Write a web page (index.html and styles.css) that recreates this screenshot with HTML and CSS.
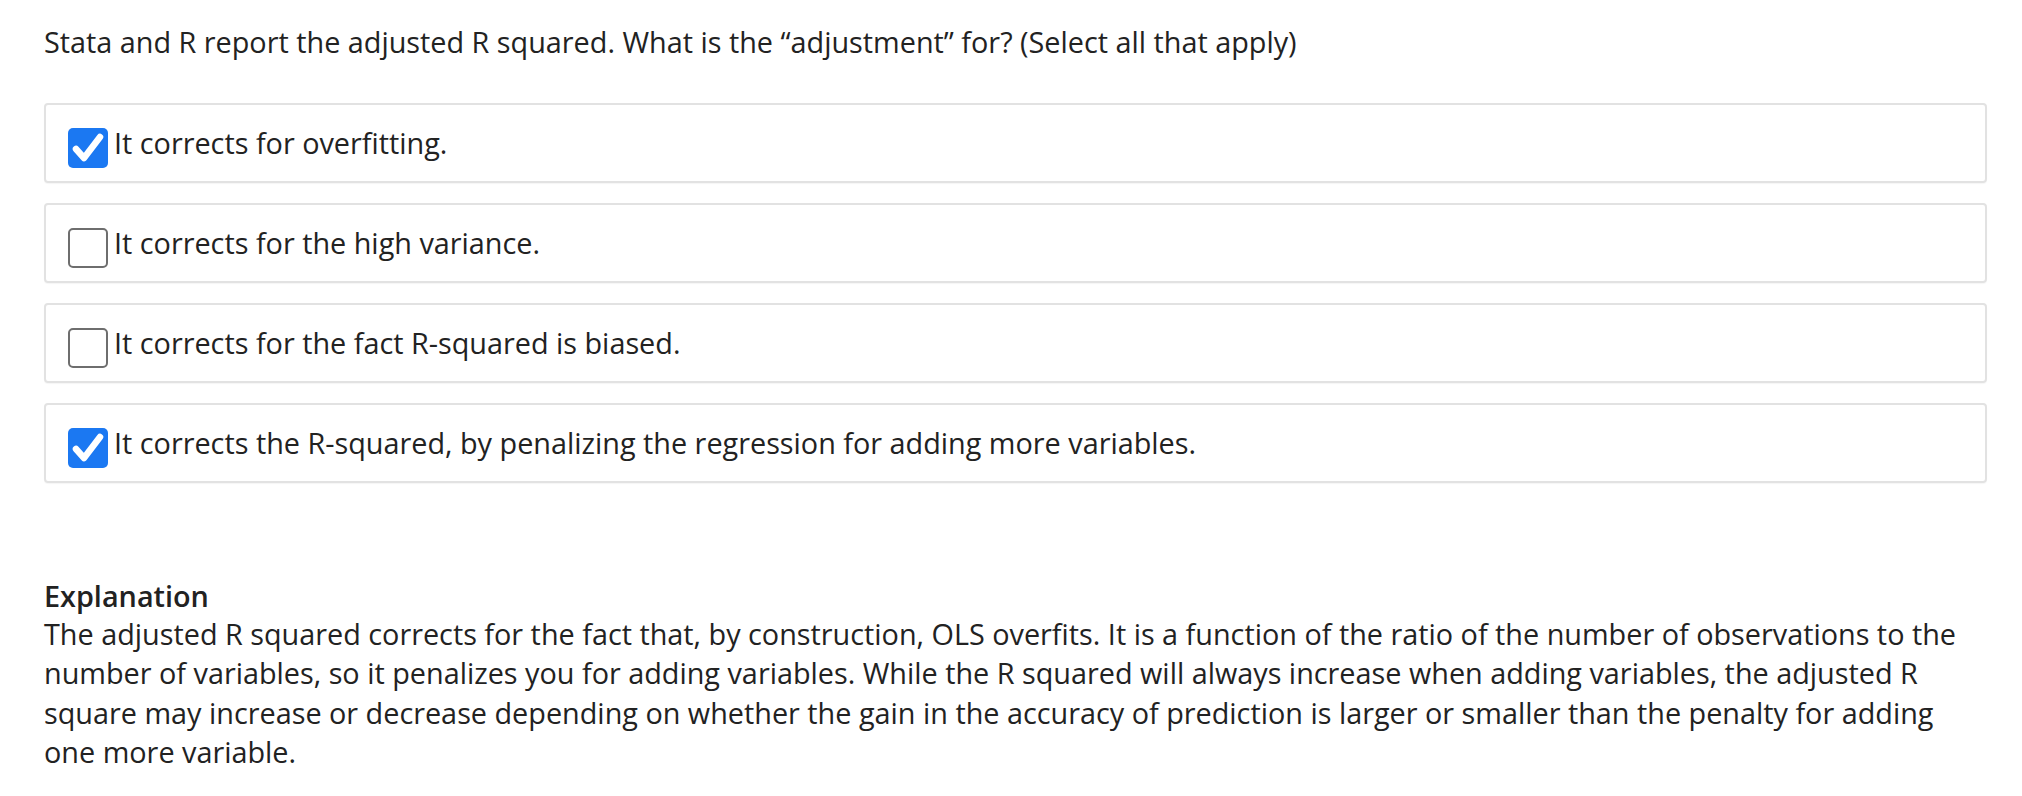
FILE: index.html
```html
<!DOCTYPE html>
<html lang="en">
<head>
<meta charset="utf-8">
<title>Adjusted R squared</title>
<link rel="stylesheet" href="styles.css">
</head>
<body>
<main class="quiz">
  <p class="question">Stata and R report the adjusted R squared. What is the “adjustment” for? (Select all that apply)</p>
  <ul class="options">
    <li class="option">
      <span class="check checked"><svg viewBox="0 0 40 40"><path d="M8 21 L16 30 L32 9"/></svg></span>
      <span class="label">It corrects for overfitting.</span>
    </li>
    <li class="option">
      <span class="check"></span>
      <span class="label">It corrects for the high variance.</span>
    </li>
    <li class="option">
      <span class="check"></span>
      <span class="label">It corrects for the fact R-squared is biased.</span>
    </li>
    <li class="option">
      <span class="check checked"><svg viewBox="0 0 40 40"><path d="M8 21 L16 30 L32 9"/></svg></span>
      <span class="label">It corrects the R-squared, by penalizing the regression for adding more variables.</span>
    </li>
  </ul>
  <section class="explanation">
    <h2 class="exp-title">Explanation</h2>
    <p class="exp-text">The adjusted R squared corrects for the fact that, by construction, OLS overfits. It is a function of the ratio of the number of observations to the number of variables, so it penalizes you for adding variables. While the R squared will always increase when adding variables, the adjusted R square may increase or decrease depending on whether the gain in the accuracy of prediction is larger or smaller than the penalty for adding one more variable.</p>
  </section>
</main>
</body>
</html>
```

FILE: styles.css
```css
html, body {
  margin: 0;
  padding: 0;
  background: #ffffff;
}
body {
  font-family: "Open Sans", "Liberation Sans", sans-serif;
  font-size: 28.8px;
  line-height: 39.6px;
  color: #222222;
}
.quiz {
  padding: 22px 35px 0 44px;
}
.question {
  margin: 0 0 41px 0;
}
.options {
  list-style: none;
  margin: 0;
  padding: 0;
  display: flex;
  flex-direction: column;
  gap: 20px;
}
.option {
  display: flex;
  align-items: flex-start;
  gap: 6px;
  border: 2px solid #e2e2e2;
  border-radius: 4px;
  padding: 18px 22px 18px 22px;
  box-shadow: 0 1px 1px rgba(0,0,0,0.04);
}
.check {
  flex: 0 0 auto;
  width: 40px;
  height: 40px;
  margin: 5px 0 -5px 0;
  box-sizing: border-box;
  border: 2px solid #6e6e6e;
  border-radius: 5px;
  background: #fff;
  display: flex;
}
.check.checked {
  border: none;
  background: #1b78f2;
}
.check svg {
  width: 40px;
  height: 40px;
}
.check svg path {
  fill: none;
  stroke: #ffffff;
  stroke-width: 6.5;
  stroke-linecap: round;
  stroke-linejoin: round;
}
.explanation {
  margin-top: 94px;
}
.exp-title {
  margin: 0;
  font-size: 28.8px;
  line-height: 37px;
  font-weight: 600;
}
.exp-text {
  margin: 0;
}
```
